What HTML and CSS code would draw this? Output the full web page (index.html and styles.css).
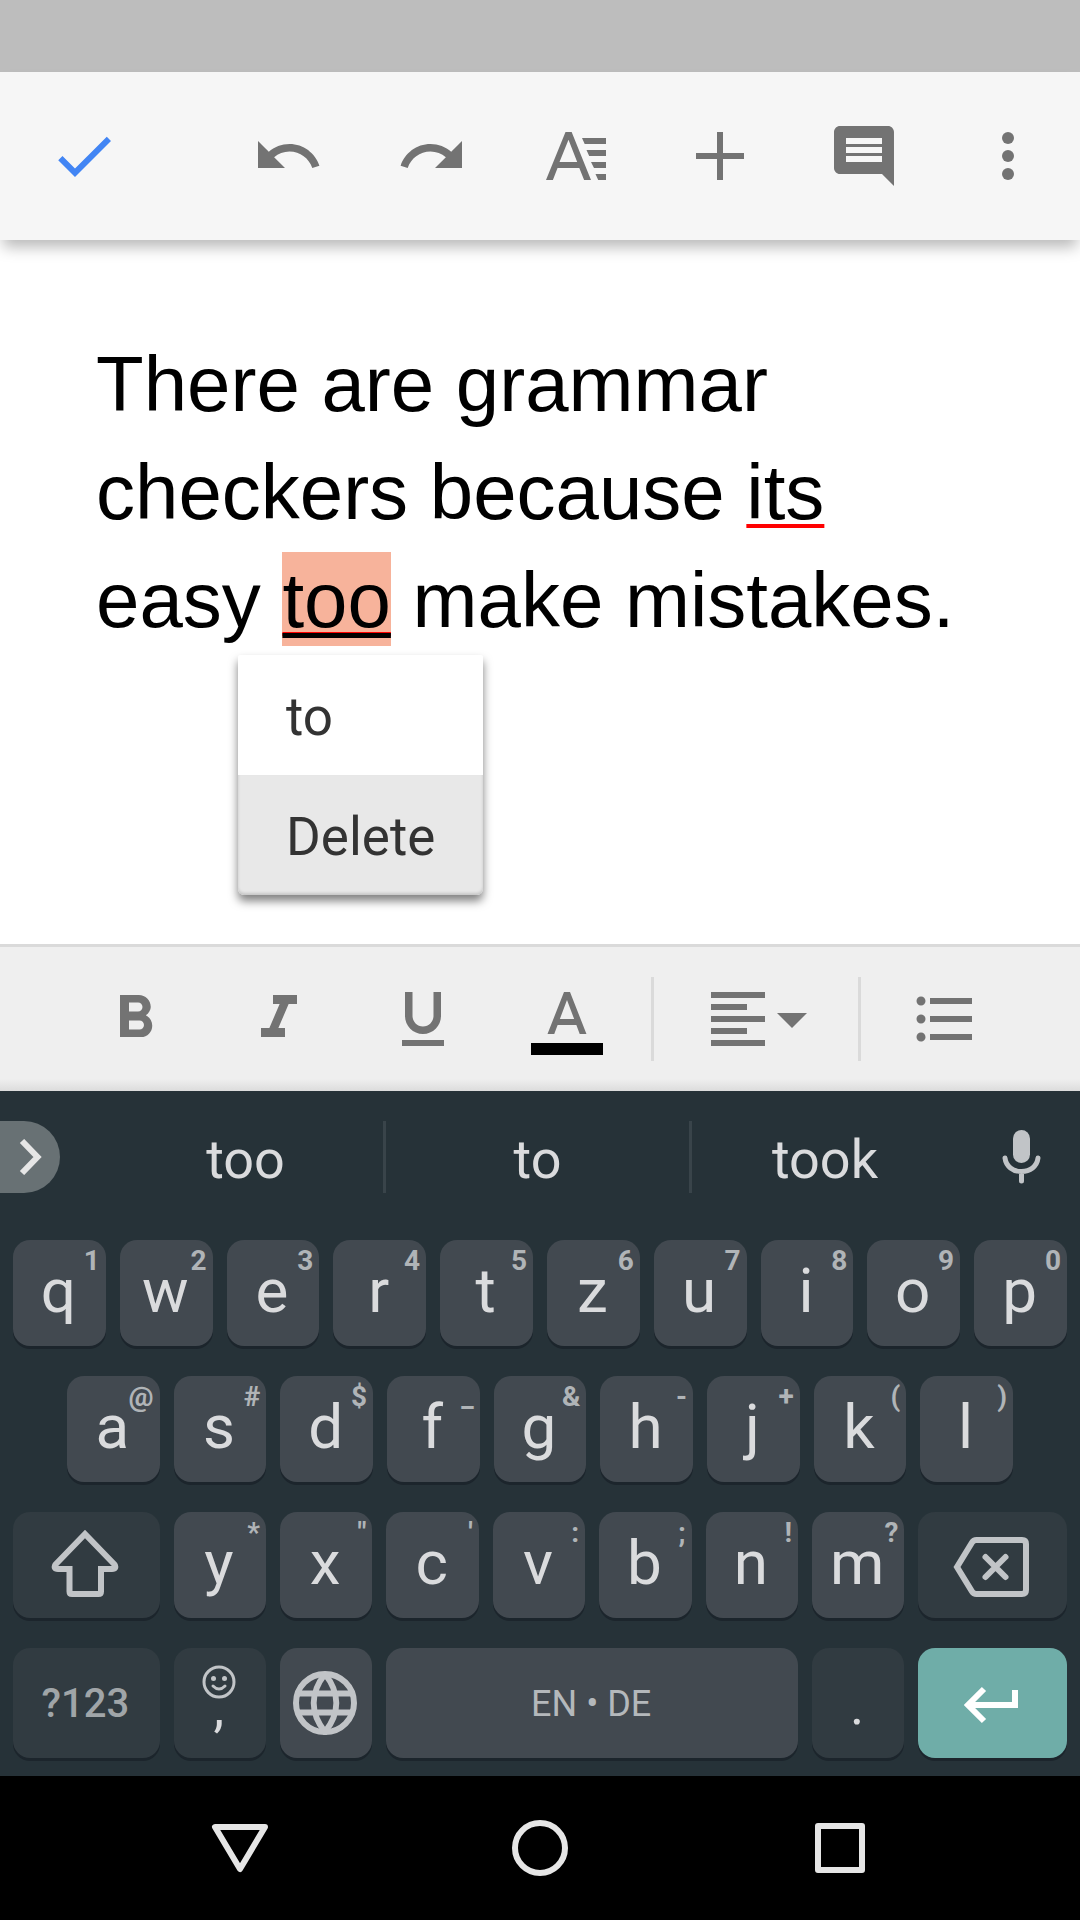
FILE: index.html
```html
<!DOCTYPE html>
<html lang="en">
<head>
<meta charset="utf-8">
<meta name="viewport" content="width=device-width, initial-scale=1">
<title>Document editor</title>
<link rel="stylesheet" href="styles.css">
</head>
<body>
<div class="status-bar"></div>

<header class="toolbar">
  <button class="done" type="button" aria-label="Done">
    <svg class="icon" viewBox="0 0 24 24"><path d="M9 16.17L4.83 12l-1.42 1.41L9 19 21 7l-1.41-1.41z"/></svg>
  </button>
  <div class="toolbar-actions">
    <button class="tool" type="button" aria-label="Undo">
      <svg class="icon" viewBox="0 0 24 24"><path d="M12.5 8c-2.65 0-5.05.99-6.9 2.6L2 7v9h9l-3.62-3.62c1.39-1.16 3.16-1.88 5.12-1.88 3.54 0 6.55 2.31 7.6 5.5l2.37-.78C21.08 11.03 17.15 8 12.5 8z"/></svg>
    </button>
    <button class="tool" type="button" aria-label="Redo">
      <svg class="icon" viewBox="0 0 24 24"><path d="M18.4 10.6C16.55 8.99 14.15 8 11.5 8c-4.65 0-8.58 3.03-9.96 7.22L3.9 16c1.05-3.19 4.05-5.5 7.6-5.5 1.95 0 3.73.72 5.12 1.88L13 16h9V7l-3.6 3.6z"/></svg>
    </button>
    <button class="tool" type="button" aria-label="Format">
      <svg class="icon" viewBox="0 0 24 24"><path d="M8.5 4L2 20h2.3l1.55-4h7.25l1.6 4H17L10.55 4zM6.5 14l3-7.4 2.9 7.4zM14 6h8v2h-7.1zM15.5 10H22v2h-5.6zM17 14h5v2h-4zM18.5 18H22v2h-2.6z"/></svg>
    </button>
    <button class="tool" type="button" aria-label="Insert">
      <svg class="icon" viewBox="0 0 24 24"><path d="M20 13h-7v7h-2v-7H4v-2h7V4h2v7h7z"/></svg>
    </button>
    <button class="tool" type="button" aria-label="Comment">
      <svg class="icon" viewBox="0 0 24 24"><path d="M21.99 4c0-1.1-.89-2-1.99-2H4c-1.1 0-2 .9-2 2v12c0 1.1.9 2 2 2h14l4 4-.01-18zM18 14H6v-2h12v2zm0-3H6V9h12v2zm0-3H6V6h12v2z"/></svg>
    </button>
    <button class="tool" type="button" aria-label="More options">
      <svg class="icon" viewBox="0 0 24 24"><circle cx="12" cy="6" r="2"/><circle cx="12" cy="12" r="2"/><circle cx="12" cy="18" r="2"/></svg>
    </button>
  </div>
</header>

<main class="page">
  <p class="text">There are grammar checkers because <span class="error">its</span> easy <span class="error error-active"><span class="composing">too</span></span> make mistakes.</p>
  <div class="popup" role="menu">
    <button class="popup-item" type="button" role="menuitem">to</button>
    <button class="popup-item popup-item-delete" type="button" role="menuitem">Delete</button>
  </div>
</main>

<div class="format-bar">
  <button class="tool" type="button" aria-label="Bold">
    <svg class="icon" viewBox="0 0 24 24"><path d="M15.6 10.79c.97-.67 1.65-1.77 1.65-2.79 0-2.26-1.75-4-4-4H7v14h7.04c2.09 0 3.71-1.7 3.71-3.79 0-1.52-.86-2.82-2.15-3.42zM10 6.5h3c.83 0 1.5.67 1.5 1.5s-.67 1.5-1.5 1.5h-3v-3zm3.5 9H10v-3h3.5c.83 0 1.5.67 1.5 1.5s-.67 1.5-1.5 1.5z"/></svg>
  </button>
  <button class="tool" type="button" aria-label="Italic">
    <svg class="icon" viewBox="0 0 24 24"><path d="M10 4v3h2.21l-3.42 8H6v3h8v-3h-2.21l3.42-8H18V4z"/></svg>
  </button>
  <button class="tool" type="button" aria-label="Underline">
    <svg class="icon" viewBox="0 0 24 24"><path d="M12 17c3.31 0 6-2.69 6-6V3h-2.5v8c0 1.93-1.57 3.5-3.5 3.5S8.5 12.93 8.5 11V3H6v8c0 3.31 2.69 6 6 6zm-7 2v2h14v-2H5z"/></svg>
  </button>
  <button class="tool" type="button" aria-label="Text colour">
    <svg class="icon" viewBox="0 0 24 24"><path d="M11 3L5.5 17h2.25l1.12-3h6.25l1.12 3h2.25L13 3h-2zm-1.38 9L12 5.67 14.38 12H9.62z"/><path class="swatch" d="M0 20h24v4H0z"/></svg>
  </button>
  <span class="divider"></span>
  <button class="tool tool-align" type="button" aria-label="Alignment">
    <svg class="icon icon-wide" viewBox="0 0 42 24"><path d="M15 15H3v2h12v-2zm0-8H3v2h12V7zM3 13h18v-2H3v2zm0 8h18v-2H3v2zM3 3v2h18V3H3z"/><path d="M25 10l5 5 5-5z"/></svg>
  </button>
  <span class="divider"></span>
  <button class="tool tool-list" type="button" aria-label="Bulleted list">
    <svg class="icon" viewBox="0 0 24 24"><path d="M4 10.5c-.83 0-1.5.67-1.5 1.5s.67 1.5 1.5 1.5 1.5-.67 1.5-1.5-.67-1.5-1.5-1.5zm0-6c-.83 0-1.5.67-1.5 1.5S3.17 7.5 4 7.5 5.5 6.83 5.5 6 4.83 4.5 4 4.5zm0 12c-.83 0-1.5.68-1.5 1.5s.68 1.5 1.5 1.5 1.5-.68 1.5-1.5-.67-1.5-1.5-1.5zM7 19h14v-2H7v2zm0-6h14v-2H7v2zm0-8v2h14V5H7z"/></svg>
  </button>
</div>

<section class="keyboard" aria-label="Keyboard">
  <div class="suggestions">
    <button class="expand" type="button" aria-label="More">
      <svg class="line-icon expand-icon" viewBox="0 0 24 36" width="24" height="36"><path d="M3 2l15.500 16L3 34"/></svg>
    </button>
    <button class="suggestion" type="button">too</button>
    <span class="separator"></span>
    <button class="suggestion" type="button">to</button>
    <span class="separator"></span>
    <button class="suggestion" type="button">took</button>
    <button class="mic" type="button" aria-label="Voice input">
      <svg class="line-icon" viewBox="0 0 40 54" width="40" height="54"><rect class="solid" x="11" y="0" width="17" height="33" rx="8.5"/><path class="round" d="M3 28c1 8.500 8 13.500 16.500 13.500S35 36.500 36 28M19.500 42v9"/></svg>
    </button>
  </div>

  <div class="keys">
    <div class="row row-top">
      <button class="key" type="button">q<span class="hint">1</span></button>
      <button class="key" type="button">w<span class="hint">2</span></button>
      <button class="key" type="button">e<span class="hint">3</span></button>
      <button class="key" type="button">r<span class="hint">4</span></button>
      <button class="key" type="button">t<span class="hint">5</span></button>
      <button class="key" type="button">z<span class="hint">6</span></button>
      <button class="key" type="button">u<span class="hint">7</span></button>
      <button class="key" type="button">i<span class="hint">8</span></button>
      <button class="key" type="button">o<span class="hint">9</span></button>
      <button class="key" type="button">p<span class="hint">0</span></button>
    </div>
    <div class="row row-home">
      <button class="key" type="button">a<span class="hint">@</span></button>
      <button class="key" type="button">s<span class="hint">#</span></button>
      <button class="key" type="button">d<span class="hint">$</span></button>
      <button class="key" type="button">f<span class="hint">_</span></button>
      <button class="key" type="button">g<span class="hint">&amp;</span></button>
      <button class="key" type="button">h<span class="hint">-</span></button>
      <button class="key" type="button">j<span class="hint">+</span></button>
      <button class="key" type="button">k<span class="hint">(</span></button>
      <button class="key" type="button">l<span class="hint">)</span></button>
    </div>
    <div class="row row-wide">
      <button class="key key-dark" type="button" aria-label="Shift">
        <svg class="line-icon" viewBox="0 0 70 68" width="70" height="68"><path d="M35 5L5.500 35.500Q3 40 8 40H19.500V62.500Q19.500 65 22 65H48.500Q51 65 51 62.500V40H62Q67 40 64.500 35.500Z"/></svg>
      </button>
      <button class="key" type="button">y<span class="hint">*</span></button>
      <button class="key" type="button">x<span class="hint">"</span></button>
      <button class="key" type="button">c<span class="hint">'</span></button>
      <button class="key" type="button">v<span class="hint">:</span></button>
      <button class="key" type="button">b<span class="hint">;</span></button>
      <button class="key" type="button">n<span class="hint">!</span></button>
      <button class="key" type="button">m<span class="hint">?</span></button>
      <button class="key key-dark key-backspace" type="button" aria-label="Backspace">
        <svg class="line-icon" viewBox="0 0 78 60" width="78" height="60"><path d="M5 30L20 5.500Q21.500 3 24.500 3H70Q74 3 74 7V53Q74 57 70 57H24.500Q21.500 57 20 54.500Z"/><path class="round" d="M33.500 20l20 20M53.500 20l-20 20"/></svg>
      </button>
    </div>
    <div class="row row-wide row-bottom">
      <button class="key key-dark key-symbols" type="button">?123</button>
      <button class="key key-dark key-comma" type="button">
        <svg class="line-icon thin" viewBox="0 0 34 34" width="34" height="34"><circle cx="17" cy="17" r="15"/><circle class="solid" cx="11.500" cy="13.500" r="2.500"/><circle class="solid" cx="22.500" cy="13.500" r="2.500"/><path class="round" d="M11 21q6 6 12 0"/></svg>
        <span class="comma">,</span>
      </button>
      <button class="key" type="button" aria-label="Switch language">
        <svg class="line-icon" viewBox="-32 -32 64 64" width="64" height="64"><circle r="29"/><path d="M0-29C-15-10-15 10 0 29C15 10 15-10 0-29M-27-9.500H27M-27 9.500H27"/></svg>
      </button>
      <button class="key key-space" type="button">EN • DE</button>
      <button class="key key-dark key-period" type="button">.</button>
      <button class="key key-enter" type="button" aria-label="Enter">
        <svg class="line-icon" viewBox="0 0 60 38" width="60" height="38"><path d="M55 4V19H8M24 3L8 19L24 35"/></svg>
      </button>
    </div>
  </div>
</section>

<nav class="nav-bar" aria-label="System navigation">
  <button class="nav-button" type="button" aria-label="Back">
    <svg class="line-icon" viewBox="0 0 60 60" width="60" height="60"><path class="round" d="M5 9H55L30 51Z"/></svg>
  </button>
  <button class="nav-button" type="button" aria-label="Home">
    <svg class="line-icon" viewBox="0 0 60 60" width="60" height="60"><circle cx="30" cy="30" r="25"/></svg>
  </button>
  <button class="nav-button" type="button" aria-label="Overview">
    <svg class="line-icon" viewBox="0 0 60 60" width="60" height="60"><rect class="round" x="8" y="8" width="44" height="44"/></svg>
  </button>
</nav>
</body>
</html>
```

FILE: styles.css
```css
* {
  box-sizing: border-box;
}

body {
  margin: 0;
  min-height: 100vh;
  display: flex;
  flex-direction: column;
  background: #fff;
  font-family: Roboto, "Liberation Sans", sans-serif;
}

button {
  margin: 0;
  padding: 0;
  border: 0;
  background: none;
  color: inherit;
  font: inherit;
}

svg {
  display: block;
  flex: none;
}

/* Icons */

.icon {
  width: 72px;
  height: 72px;
  fill: #737373;
}

.icon-wide {
  width: 126px;
}

.swatch {
  fill: #000;
}

.line-icon {
  fill: none;
  stroke: #c1c4c7;
  stroke-width: 6;
}

.line-icon.thin {
  stroke-width: 3;
}

.solid {
  fill: #c1c4c7;
  stroke: none;
}

.round {
  stroke-linecap: round;
  stroke-linejoin: round;
}

/* Top bars */

.status-bar {
  height: 72px;
  background: #bdbdbd;
}

.toolbar {
  position: relative;
  z-index: 1;
  display: flex;
  justify-content: space-between;
  height: 168px;
  background: #f6f6f6;
  box-shadow: 0 10px 14px -3px rgba(0, 0, 0, 0.28);
}

.toolbar-actions {
  display: flex;
}

.tool,
.done {
  display: flex;
  align-items: center;
  justify-content: center;
  width: 144px;
}

.done {
  width: 168px;
}

.done .icon {
  fill: #4285f4;
}

/* Document */

.page {
  position: relative;
  flex: 1;
  padding: 90px 96px;
}

.text {
  margin: 0;
  font-family: "Liberation Sans", Arial, sans-serif;
  font-size: 78px;
  line-height: 108px;
  color: #000;
}

.error {
  text-decoration: underline 4px #f00;
  text-underline-offset: 5px;
  text-decoration-skip-ink: none;
}

.error-active {
  padding: 4px 0 2px;
  background: #f7b39b;
}

.composing {
  text-decoration: underline 5px #000;
  text-underline-offset: 6px;
  text-decoration-skip-ink: none;
}

.popup {
  position: absolute;
  top: 415px;
  left: 238px;
  display: flex;
  flex-direction: column;
  border-radius: 2px 2px 6px 6px;
  background: #fff;
  box-shadow: 0 6px 10px rgba(0, 0, 0, 0.5);
}

.popup-item {
  height: 120px;
  padding: 4px 48px 0;
  font-size: 53px;
  text-align: left;
  color: #333;
}

.popup-item-delete {
  border-radius: 0 0 6px 6px;
  background: #e8e8e8;
  box-shadow: inset 0 -2px 3px rgba(0, 0, 0, 0.15);
}

/* Formatting bar */

.format-bar {
  display: flex;
  align-items: center;
  height: 147px;
  padding-left: 63px;
  border-top: 3px solid #dadada;
  background: linear-gradient(#efefef 132px, #dcdcdc);
}

.divider {
  width: 3px;
  height: 84px;
  background: #dadada;
}

.tool + .divider {
  margin-left: 12px;
}

.tool-align + .divider {
  margin-left: 0;
}

.tool-align {
  width: 204px;
  padding-left: 18px;
}

.tool-list {
  width: 168px;
}

/* Keyboard */

.keyboard {
  background: #263238;
  color: #dadbdd;
}

.suggestions {
  display: grid;
  grid-template-columns: 108px 275fr 3px 303fr 3px 266fr 122px;
  align-items: center;
  height: 132px;
  font-size: 54px;
}

.expand {
  display: flex;
  align-items: center;
  justify-content: flex-end;
  width: 60px;
  height: 72px;
  padding-right: 17px;
  border-radius: 0 36px 36px 0;
  background: #687174;
}

.expand-icon {
  stroke: #e6e6e6;
}

.separator {
  height: 72px;
  background: #39444a;
}

.suggestion {
  padding-top: 4px;
}

.mic {
  display: flex;
  justify-content: center;
  padding-left: 5px;
}

.mic .round {
  stroke-width: 5;
}

.keys {
  display: flex;
  flex-direction: column;
  gap: 30px;
  padding: 17px 13px 18px;
}

.row {
  display: grid;
  gap: 14px;
  height: 106px;
}

.row-top {
  grid-template-columns: repeat(10, 1fr);
}

.row-home {
  grid-template-columns: repeat(9, 1fr);
  padding: 0 54px;
}

.row-wide {
  grid-template-columns: 146fr repeat(7, 92fr) 148fr;
}

.row-bottom {
  height: 110px;
}

.key {
  position: relative;
  display: flex;
  align-items: center;
  justify-content: center;
  min-width: 0;
  padding: 0 2px 4px 0;
  border-radius: 17px;
  background: #424950;
  box-shadow: 0 3px 0 #1c252c;
  font-size: 62px;
  line-height: 72px;
}

.row-bottom .key {
  padding-bottom: 0;
}

.key-dark {
  background: #313b41;
}

.hint {
  position: absolute;
  top: 5px;
  right: 6px;
  font-size: 28px;
  font-weight: 700;
  line-height: 32px;
  color: #b0b4b7;
}

.key-backspace {
  padding: 4px 4px 0 0;
}

.row-bottom .key-symbols {
  padding-top: 2px;
  font-size: 40px;
  font-weight: 500;
  color: #a0a5a8;
}

.row-bottom .key-comma {
  flex-direction: column;
  justify-content: flex-start;
  padding-top: 17px;
}

.comma {
  font-size: 54px;
  line-height: 18px;
}

.row-bottom .key-period {
  padding-top: 6px;
  font-size: 54px;
}

.row-bottom .key-space {
  grid-column: span 4;
  padding-top: 2px;
  font-size: 36px;
  color: #b4b8bb;
}

.row-bottom .key-enter {
  padding: 4px 6px 0 0;
  background: #6fada8;
}

.key-enter .line-icon {
  stroke: #fff;
}

/* System navigation */

.nav-bar {
  display: grid;
  grid-template-columns: repeat(3, 1fr);
  align-items: center;
  height: 144px;
  padding: 0 90px;
  background: #000;
}

.nav-button {
  display: flex;
  justify-content: center;
}

.nav-button .line-icon {
  stroke: #e6e6e6;
}
```
